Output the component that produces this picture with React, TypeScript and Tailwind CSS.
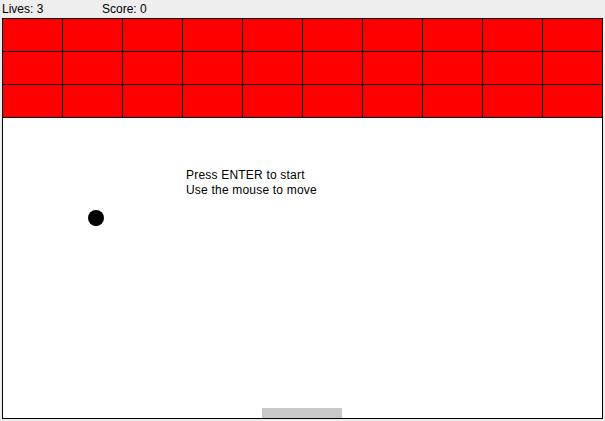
const ROWS = 3;
const COLS = 10;

export default function App() {
  const bricks = Array.from({ length: ROWS * COLS });

  return (
    <div
      className="w-[605px] h-[421px] bg-[#eeeeee] text-black text-[12px] overflow-hidden"
      style={{ fontFamily: '"Liberation Sans", Arial, sans-serif' }}
    >
      <div className="flex h-[18px] leading-[18px] pl-[2px]">
        <span className="w-[100px]">Lives: 3</span>
        <span>Score: 0</span>
      </div>

      <div className="ml-[2px] w-[601px] border-l border-t border-b border-black bg-white">
        <div className="grid grid-cols-[repeat(10,60px)]">
          {bricks.map((_, i) => (
            <div key={i} className="h-[33px] bg-[#ff0000] border-r border-b border-black" />
          ))}
        </div>

        <div className="relative h-[300px] border-r border-black">
          <div className="absolute left-[183px] top-[50px] leading-[15px] tracking-[0.2px]">
            <div>Press ENTER to start</div>
            <div>Use the mouse to move</div>
          </div>
          <div className="absolute left-[85px] top-[92px] w-4 h-4 rounded-full bg-black" />
          <div className="absolute left-[259px] bottom-0 w-20 h-[10px] bg-[#c8c8c8]" />
        </div>
      </div>
    </div>
  );
}
